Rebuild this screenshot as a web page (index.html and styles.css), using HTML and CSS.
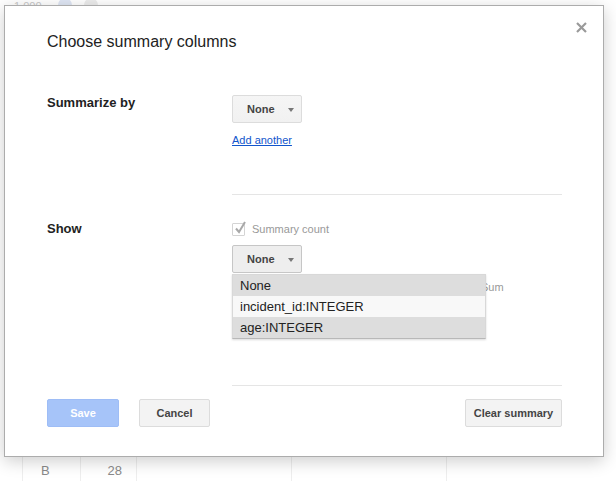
FILE: index.html
```html
<!DOCTYPE html>
<html>
<head>
<meta charset="utf-8">
<link rel="stylesheet" href="styles.css">
</head>
<body>
<div class="sheet">
  <div class="sheet-top">
    <span class="top-num">1,000</span>
    <span class="top-dot blue"></span>
    <span class="top-dot"></span>
  </div>
  <div class="sheet-row filler">
    <div class="cell c1"></div><div class="cell c2"></div><div class="cell c3"></div><div class="cell c4"></div><div class="cell c5"></div><div class="cell c6"></div>
  </div>
  <div class="sheet-row">
    <div class="cell c1"></div><div class="cell c2 t-left">B</div><div class="cell c3 t-right">28</div><div class="cell c4"></div><div class="cell c5"></div><div class="cell c6"></div>
  </div>
</div>

<div class="dialog">
  <div class="close">
    <svg width="11" height="11" viewBox="0 0 11 11"><path d="M1 1 L10 10 M10 1 L1 10" stroke="#9a9a9a" stroke-width="2.2" fill="none"/></svg>
  </div>
  <div class="title">Choose summary columns</div>

  <div class="form">
    <div class="label">Summarize by</div>
    <div class="content">
      <div class="dropdown"><span>None</span><span class="arrow"></span></div>
      <a class="link" href="#">Add another</a>
    </div>

    <div></div>
    <div class="divider d1"></div>

    <div class="label show">Show</div>
    <div class="content show-content">
      <div class="check-row">
        <span class="checkbox">
          <svg width="14" height="15" viewBox="0 0 14 15"><path d="M3 8.5 L6 12 L12 2" stroke="#a8a8a8" stroke-width="2" fill="none"/></svg>
        </span>
        <span class="check-label">Summary count</span>
      </div>
      <div class="dd-wrap">
        <div class="dropdown open"><span>None</span><span class="arrow"></span></div>
        <div class="menu">
          <div class="item hl">None</div>
          <div class="item">incident_id:INTEGER</div>
          <div class="item hl">age:INTEGER</div>
        </div>
      </div>
      <div class="agg-row"><span class="agg">Sum</span></div>
    </div>

    <div></div>
    <div class="divider d2"></div>
  </div>

  <div class="footer">
    <button class="btn save">Save</button>
    <button class="btn cancel">Cancel</button>
    <span class="spacer"></span>
    <button class="btn clear">Clear summary</button>
  </div>
</div>
</body>
</html>
```
FILE: styles.css
```css
html, body {
  margin: 0;
  padding: 0;
  background: #fff;
  width: 616px;
  height: 481px;
  overflow: hidden;
  font-family: Arial, "Liberation Sans", sans-serif;
}

.sheet {
  width: 616px;
  height: 481px;
  display: flex;
  flex-direction: column;
}
.sheet-top {
  height: 16px;
  display: flex;
  align-items: center;
  gap: 12px;
  padding-left: 14px;
  box-sizing: border-box;
}
.top-num {
  font-size: 11px;
  color: #c8c8c8;
  margin-top: -4px;
}
.top-dot {
  width: 14px;
  height: 14px;
  border-radius: 50%;
  background: #ececec;
  margin-top: -6px;
}
.top-dot.blue {
  background: #dfe6f4;
  margin-left: 4px;
}
.sheet-row {
  display: flex;
  height: 20px;
}
.sheet-row.filler {
  height: 448px;
}
.cell {
  border-left: 1px solid #eeeeee;
  box-sizing: border-box;
  font-size: 13px;
  color: #8a8a8a;
  line-height: 20px;
}
.c1 { width: 22px; border-left: none; }
.c2 { width: 58px; }
.c3 { width: 56px; }
.c4 { width: 155px; }
.c5 { width: 155px; }
.c6 { flex: 1; }
.t-left { padding-left: 18px; }
.t-right { text-align: right; padding-right: 14px; }

.dialog {
  position: absolute;
  left: 4px;
  top: 5px;
  width: 600px;
  height: 452px;
  box-sizing: border-box;
  background: #fff;
  border: 1px solid #acacac;
  box-shadow: 0 4px 16px rgba(0, 0, 0, 0.2);
  padding: 26px 42px 0 42px;
}
.close {
  position: absolute;
  right: 16px;
  top: 16px;
  width: 11px;
  height: 11px;
  line-height: 0;
}
.title {
  font-size: 16px;
  line-height: 20px;
  color: #222;
}

.form {
  display: grid;
  grid-template-columns: 185px 330px;
  margin-top: 43px;
}
.label {
  font-size: 13px;
  font-weight: bold;
  color: #222;
  line-height: 16px;
}
.content {
  display: flex;
  flex-direction: column;
  align-items: flex-start;
}
.dropdown {
  width: 70px;
  height: 28px;
  box-sizing: border-box;
  border: 1px solid #dcdcdc;
  border-radius: 2px;
  background: linear-gradient(#f5f5f5, #f1f1f1);
  display: flex;
  align-items: center;
  padding-left: 14px;
  font-size: 11px;
  font-weight: bold;
  color: #444;
}
.dropdown.open {
  background: #eeeeee;
  border-color: #c6c6c6;
}
.arrow {
  width: 0;
  height: 0;
  border-left: 3.5px solid transparent;
  border-right: 3.5px solid transparent;
  border-top: 4px solid #777;
  margin-left: 13px;
  margin-top: 1px;
}
.link {
  margin-top: 10px;
  font-size: 11px;
  line-height: 14px;
  color: #1155cc;
  text-decoration: underline;
}
.divider {
  height: 1px;
  background: #e5e5e5;
}
.d1 {
  margin-top: 47px;
}
.show {
  margin-top: 26px;
}
.show-content {
  margin-top: 26px;
}
.check-row {
  display: flex;
  align-items: center;
  height: 16px;
}
.checkbox {
  width: 13px;
  height: 13px;
  box-sizing: border-box;
  border: 1px solid #d4d4d4;
  border-radius: 1px;
  position: relative;
  margin-top: 1px;
}
.checkbox svg {
  position: absolute;
  left: 0;
  top: -4px;
}
.check-label {
  margin-left: 7px;
  font-size: 11px;
  color: #999;
}
.dd-wrap {
  position: relative;
  margin-top: 8px;
}
.menu {
  position: absolute;
  left: 0;
  top: 29px;
  width: 254px;
  background: #fff;
  border: 1px solid #d8d8d8;
  border-bottom-color: #b8b8b8;
  box-sizing: border-box;
  z-index: 2;
  box-shadow: 0 1px 2px rgba(0, 0, 0, 0.15);
}
.item {
  height: 21px;
  line-height: 21px;
  padding-left: 7px;
  font-size: 13px;
  color: #222;
  background: #f8f8f8;
}
.item.hl {
  background: #dddddd;
}
.agg-row {
  margin-top: 7px;
  height: 14px;
  font-size: 11px;
  color: #999;
  line-height: 14px;
}
.agg {
  margin-left: 249px;
}
.d2 {
  margin-top: 91px;
}

.footer {
  display: flex;
  align-items: center;
  margin-top: 13px;
  width: 515px;
}
.btn {
  height: 28px;
  box-sizing: border-box;
  border-radius: 2px;
  font-family: Arial, "Liberation Sans", sans-serif;
  font-size: 11px;
  font-weight: bold;
  padding: 0;
}
.save {
  width: 72px;
  background: #a6c4f9;
  border: 1px solid #9ebdf6;
  color: #fff;
}
.cancel {
  width: 71px;
  margin-left: 20px;
  background: #f3f3f3;
  border: 1px solid #dcdcdc;
  color: #444;
}
.spacer {
  flex: 1;
}
.clear {
  width: 97px;
  background: #f3f3f3;
  border: 1px solid #dcdcdc;
  color: #444;
}
```
